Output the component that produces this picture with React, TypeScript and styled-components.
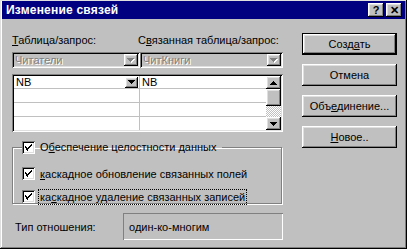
import React from "react";
import styled, { createGlobalStyle } from "styled-components";

const GlobalStyle = createGlobalStyle`
  html, body {
    margin: 0;
    padding: 0;
    background: #c0c0c0;
  }
  body {
    font-family: "Liberation Sans", Arial, sans-serif;
    font-size: 11px;
    color: #000;
  }
`;

const raised = `
  box-shadow: inset -1px -1px #000, inset 1px 1px #fff,
    inset -2px -2px #808080, inset 2px 2px #dfdfdf;
`;

const sunken = `
  box-shadow: inset 1px 1px #808080, inset -1px -1px #fff,
    inset 2px 2px #000, inset -2px -2px #dfdfdf;
`;

const Window = styled.div`
  width: 407px;
  height: 249px;
  box-sizing: border-box;
  padding: 1px 2px 2px 2px;
  background: #c0c0c0;
  box-shadow: inset -1px -1px #000, inset 1px 1px #dfdfdf,
    inset -2px -2px #808080, inset 2px 2px #fff;
  display: flex;
  flex-direction: column;
  overflow: hidden;
`;

const TitleBar = styled.div`
  height: 18px;
  background: #000080;
  display: flex;
  align-items: center;
  padding: 0 3px 0 4px;
  gap: 2px;
`;

const Title = styled.div`
  flex: 1;
  color: #fff;
  font-weight: bold;
  font-size: 12px;
  letter-spacing: 0.2px;
`;

const TitleButton = styled.div`
  width: 16px;
  height: 14px;
  box-sizing: border-box;
  background: #c0c0c0;
  ${raised}
  display: flex;
  align-items: center;
  justify-content: center;
  font-weight: bold;
  font-size: 11px;
  line-height: 1;
`;

const Body = styled.div`
  display: flex;
  padding: 14px 0 0 10px;
  gap: 19px;
`;

const LeftColumn = styled.div`
  width: 271px;
  display: flex;
  flex-direction: column;
`;

const LabelRow = styled.div`
  display: flex;
  height: 14px;
  line-height: 14px;
`;

const Label = styled.div<{ $w?: number }>`
  width: ${(p) => (p.$w ? `${p.$w}px` : "auto")};
  white-space: nowrap;
`;

const U = styled.span`
  text-decoration: underline;
  text-underline-offset: 1px;
`;

const ComboRow = styled.div`
  display: flex;
  margin-top: 5px;
`;

const Combo = styled.div<{ $w: number }>`
  width: ${(p) => p.$w}px;
  height: 16px;
  box-sizing: border-box;
  padding: 2px;
  ${sunken}
  display: flex;
  align-items: center;
`;

const ComboText = styled.div`
  flex: 1;
  padding-left: 1px;
  color: #808080;
  text-shadow: 1px 1px #fff;
  white-space: nowrap;
`;

const ArrowButton = styled.div<{ $w?: number; $h?: number }>`
  width: ${(p) => p.$w ?? 14}px;
  height: ${(p) => p.$h ?? 12}px;
  box-sizing: border-box;
  background: #c0c0c0;
  ${raised}
  display: flex;
  align-items: center;
  justify-content: center;
`;

const Grid = styled.div`
  margin-top: 6px;
  height: 58px;
  box-sizing: border-box;
  padding: 2px;
  ${sunken}
  background: #fff;
  display: flex;
`;

const Rows = styled.div`
  flex: 1;
  display: flex;
  flex-direction: column;
`;

const Row = styled.div<{ $h: number }>`
  height: ${(p) => p.$h}px;
  display: flex;
  border-bottom: 1px solid #c0c0c0;
  &:last-child {
    border-bottom: none;
  }
`;

const Cell = styled.div<{ $w?: number }>`
  width: ${(p) => (p.$w ? `${p.$w}px` : "auto")};
  flex: ${(p) => (p.$w ? "none" : 1)};
  box-sizing: border-box;
  border-right: ${(p) => (p.$w ? "1px solid #c0c0c0" : "none")};
  display: flex;
  align-items: center;
  padding: 0 1px 0 2px;
  white-space: nowrap;
`;

const CellText = styled.div`
  flex: 1;
`;

const ScrollBar = styled.div`
  width: 15px;
  display: flex;
  flex-direction: column;
`;

const Thumb = styled.div`
  height: 17px;
  background: #c0c0c0;
  ${raised}
`;

const Track = styled.div`
  flex: 1;
  background: repeating-conic-gradient(#c0c0c0 0 25%, #fff 0 50%) 0 0 / 2px 2px;
`;

const Group = styled.fieldset`
  margin: 8px 0 0 0;
  padding: 13px 0 0 9px;
  height: 64px;
  box-sizing: border-box;
  border: 1px solid #808080;
  box-shadow: inset 1px 1px #fff, 1px 1px #fff;
  min-width: 0;
  width: 270px;
`;

const Legend = styled.legend`
  padding: 0 5px 0 0;
  margin-left: 0;
  display: flex;
  align-items: center;
  height: 14px;
`;

const CheckRow = styled.div`
  display: flex;
  align-items: center;
  height: 13px;
  margin-bottom: 10px;
  &:last-child {
    margin-bottom: 0;
  }
`;

const Box = styled.div`
  width: 13px;
  height: 13px;
  box-sizing: border-box;
  background: #fff;
  ${sunken}
  display: flex;
  align-items: center;
  justify-content: center;
  margin-right: 4px;
  flex: none;
`;

const CheckText = styled.div<{ $focus?: boolean }>`
  white-space: nowrap;
  padding: 1px 1px;
  outline: ${(p) => (p.$focus ? "1px dotted #000" : "none")};
`;

const TypeRow = styled.div`
  display: flex;
  align-items: center;
  margin-top: 9px;
  height: 27px;
`;

const TypeLabel = styled.div`
  width: 108px;
  padding-left: 3px;
`;

const TypeBox = styled.div`
  flex: 1;
  height: 27px;
  box-sizing: border-box;
  box-shadow: inset 1px 1px #808080, inset -1px -1px #fff;
  display: flex;
  align-items: center;
  padding-left: 6px;
`;

const RightColumn = styled.div`
  width: 95px;
  display: flex;
  flex-direction: column;
  gap: 9px;
`;

const Button = styled.div<{ $default?: boolean }>`
  height: 22px;
  box-sizing: border-box;
  display: flex;
  align-items: center;
  justify-content: center;
  background: #c0c0c0;
  box-shadow: ${(p) =>
    p.$default
      ? "inset 0 0 0 1px #000, inset -2px -2px #000, inset 2px 2px #fff, inset -3px -3px #808080, inset 3px 3px #dfdfdf"
      : "inset -1px -1px #000, inset 1px 1px #fff, inset -2px -2px #808080, inset 2px 2px #dfdfdf"};
`;

const DownArrow = ({ color = "#000" }: { color?: string }) => (
  <svg width="7" height="4" viewBox="0 0 7 4">
    <path d="M0 0h7v1H0zM1 1h5v1H1zM2 2h3v1H2zM3 3h1v1H3z" fill={color} />
  </svg>
);

const UpArrow = () => (
  <svg width="7" height="4" viewBox="0 0 7 4">
    <path d="M3 0h1v1H3zM2 1h3v1H2zM1 2h5v1H1zM0 3h7v1H0z" fill="#000" />
  </svg>
);

const DisabledArrow = () => (
  <svg width="8" height="5" viewBox="0 0 8 5">
    <path d="M1 1h7v1H1zM2 2h5v1H2zM3 3h3v1H3zM4 4h1v1H4z" fill="#fff" />
    <path d="M0 0h7v1H0zM1 1h5v1H1zM2 2h3v1H2zM3 3h1v1H3z" fill="#808080" />
  </svg>
);

const Check = () => (
  <svg width="7" height="7" viewBox="0 0 7 7">
    <path
      d="M6 0h1v1H6zM5 1h2v1H5zM4 2h2v1H4zM0 2h1v1H0zM0 3h2v1H0zM3 3h2v1H3zM1 4h3v1H1zM1 5h2v1H1zM2 6h1v1H2z"
      fill="#000"
    />
  </svg>
);

const CheckItem = ({
  children,
  focus,
}: {
  children: React.ReactNode;
  focus?: boolean;
}) => (
  <>
    <Box>
      <Check />
    </Box>
    <CheckText $focus={focus}>{children}</CheckText>
  </>
);

export default function App() {
  return (
    <>
      <GlobalStyle />
      <Window>
        <TitleBar>
          <Title>Изменение связей</Title>
          <TitleButton>?</TitleButton>
          <TitleButton>✕</TitleButton>
        </TitleBar>
        <Body>
          <LeftColumn>
            <LabelRow>
              <Label $w={126}>
                <U>Т</U>аблица/запрос:
              </Label>
              <Label>
                С<U>в</U>язанная таблица/запрос:
              </Label>
            </LabelRow>
            <ComboRow>
              <Combo $w={128}>
                <ComboText>Читатели</ComboText>
                <ArrowButton>
                  <DisabledArrow />
                </ArrowButton>
              </Combo>
              <Combo $w={143}>
                <ComboText>ЧитКниги</ComboText>
                <ArrowButton>
                  <DisabledArrow />
                </ArrowButton>
              </Combo>
            </ComboRow>
            <Grid>
              <Rows>
                <Row $h={13}>
                  <Cell $w={126}>
                    <CellText>NB</CellText>
                    <ArrowButton $w={13} $h={11}>
                      <DownArrow />
                    </ArrowButton>
                  </Cell>
                  <Cell>NB</Cell>
                </Row>
                <Row $h={13}>
                  <Cell $w={126} />
                  <Cell />
                </Row>
                <Row $h={14}>
                  <Cell $w={126} />
                  <Cell />
                </Row>
                <Row $h={14}>
                  <Cell $w={126} />
                  <Cell />
                </Row>
              </Rows>
              <ScrollBar>
                <ArrowButton $w={15} $h={13}>
                  <UpArrow />
                </ArrowButton>
                <Thumb />
                <Track />
                <ArrowButton $w={15} $h={13}>
                  <DownArrow />
                </ArrowButton>
              </ScrollBar>
            </Grid>
            <Group>
              <Legend>
                <CheckItem>
                  О<U>б</U>еспечение целостности данных
                </CheckItem>
              </Legend>
              <CheckRow>
                <CheckItem>
                  <U>к</U>аскадное обновление связанных полей
                </CheckItem>
              </CheckRow>
              <CheckRow>
                <CheckItem focus>
                  ка<U>с</U>кадное удаление связанных записей
                </CheckItem>
              </CheckRow>
            </Group>
            <TypeRow>
              <TypeLabel>Тип отношения:</TypeLabel>
              <TypeBox>один-ко-многим</TypeBox>
            </TypeRow>
          </LeftColumn>
          <RightColumn>
            <Button $default>
              <span>
                Созд<U>а</U>ть
              </span>
            </Button>
            <Button>Отмена</Button>
            <Button>
              <span>
                Объ<U>е</U>динение...
              </span>
            </Button>
            <Button>
              <span>
                <U>Н</U>овое..
              </span>
            </Button>
          </RightColumn>
        </Body>
      </Window>
    </>
  );
}
